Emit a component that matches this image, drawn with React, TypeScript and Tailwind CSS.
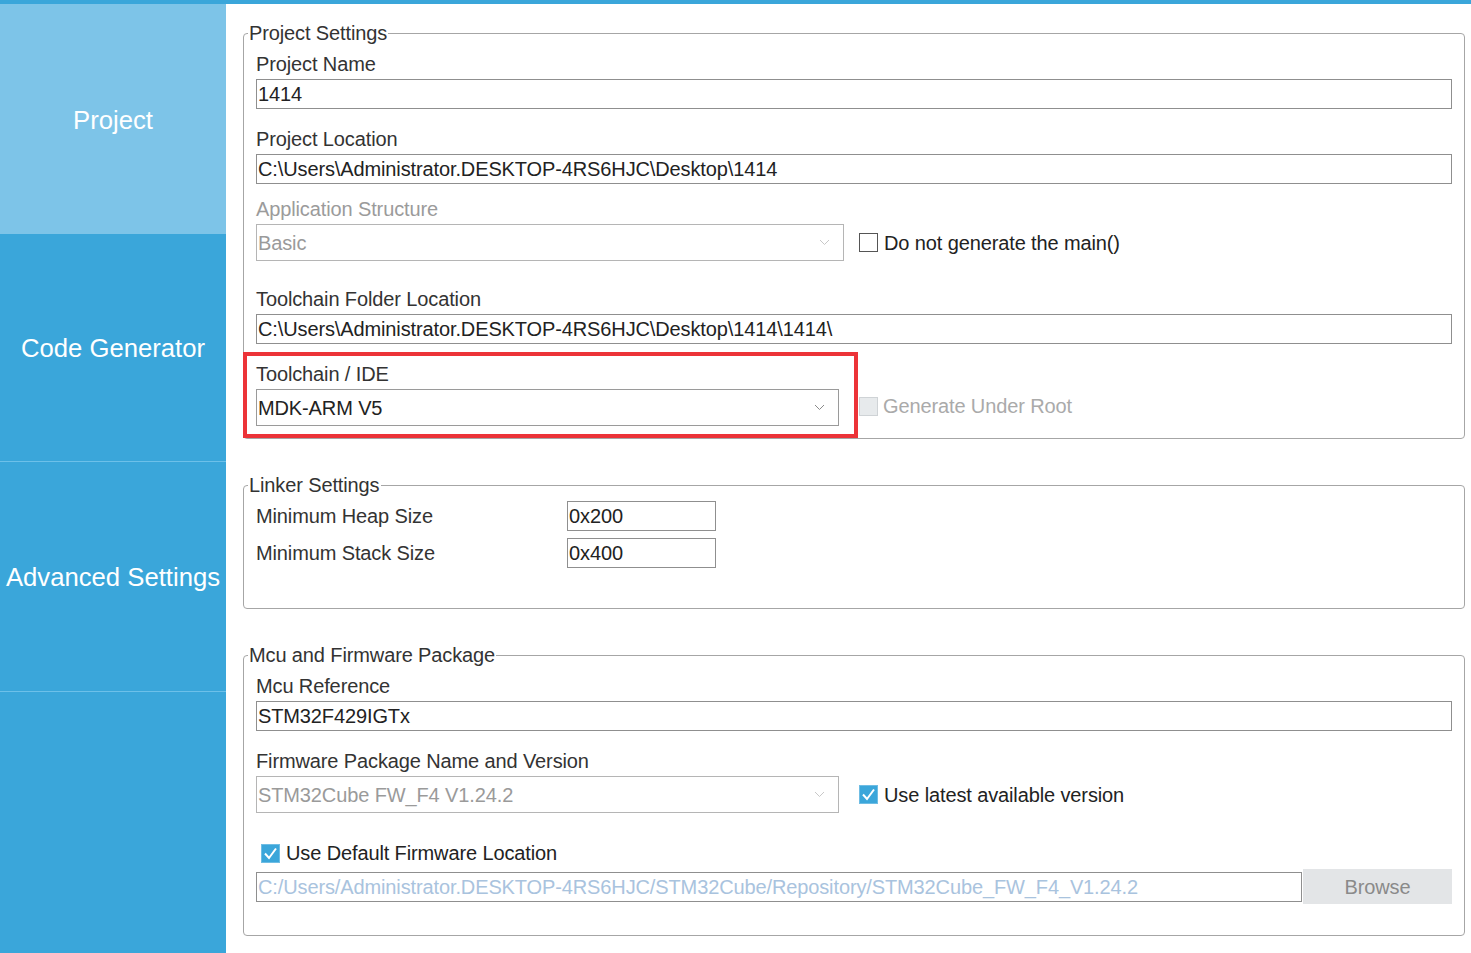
import React from 'react';

const FONT = "font-['Liberation_Sans',Arial,sans-serif]";

const Chevron = ({ light }: { light?: boolean }) => (
  <svg width="11" height="7" viewBox="0 0 11 7" className="shrink-0">
    <path d="M1 1 L5.5 5.5 L10 1" fill="none" stroke={light ? '#c8c8c8' : '#8a8a8a'} strokeWidth="1" />
  </svg>
);

const Checkbox = ({ state }: { state: 'off' | 'on' | 'disabled' }) => {
  if (state === 'on') {
    return (
      <span className="w-[19px] h-[19px] shrink-0 bg-[#3ba6da] border border-[#6fbde4] flex items-center justify-center">
        <svg width="15" height="13" viewBox="0 0 15 13">
          <path d="M2 6.5 L6 11 L13 1.5" fill="none" stroke="#ffffff" strokeWidth="2" />
        </svg>
      </span>
    );
  }
  if (state === 'disabled') {
    return <span className="w-[19px] h-[19px] shrink-0 bg-[#e7eaec] border border-[#cfd3d6]" />;
  }
  return <span className="w-[19px] h-[19px] shrink-0 bg-white border border-[#555]" />;
};

const TextInput = ({ value, className = '' }: { value: string; className?: string }) => (
  <div className={`h-[30px] border border-[#8f8f8f] bg-white flex items-center pl-[1px] text-[20px] text-[#222] whitespace-nowrap overflow-hidden ${className}`}>
    {value}
  </div>
);

const Select = ({ value, disabled, width }: { value: string; disabled?: boolean; width: string }) => (
  <div className={`${width} h-[37px] border ${disabled ? 'border-[#b5b5b5]' : 'border-[#9a9a9a]'} bg-white flex items-center justify-between pl-[1px] pr-[13px] text-[20px] ${disabled ? 'text-[#9a9a9a]' : 'text-[#222]'}`}>
    <span>{value}</span>
    <Chevron light={disabled} />
  </div>
);

const Label = ({ children, className = '', muted }: { children: React.ReactNode; className?: string; muted?: boolean }) => (
  <div className={`h-[22px] leading-[22px] text-[20px] ${muted ? 'text-[#9b9b9b]' : 'text-[#333]'} ${className}`}>{children}</div>
);

const Group = ({ title, children, className = '' }: { title: string; children: React.ReactNode; className?: string }) => (
  <fieldset className={`border border-[#a6a6a6] rounded-[4px] ${className}`}>
    <legend className="ml-[4px] px-[1px] text-[20px] leading-[22px] text-[#333]">{title}</legend>
    {children}
  </fieldset>
);

const tabs = [
  { name: 'Project', active: true },
  { name: 'Code Generator' },
  { name: 'Advanced Settings' },
];

export default function App() {
  return (
    <div className={`w-[1471px] h-[953px] overflow-hidden bg-white flex flex-col ${FONT}`}>
      <div className="h-[4px] bg-[#3aa6da] shrink-0" />
      <div className="flex flex-1 min-h-0">
        {/* Sidebar */}
        <div className="w-[226px] bg-[#3aa6da] flex flex-col">
          {tabs.map((t, i) => (
            <div
              key={t.name}
              className={`flex items-center justify-center pt-[2px] text-[25.7px] text-white whitespace-nowrap ${
                t.active ? 'h-[230px] bg-[#7dc4e8]' : 'h-[228px] bg-[#3aa6da]'
              } ${i === 1 ? 'border-b border-[#6cc0e9] h-[228px]' : ''} ${i === 2 ? 'border-b border-[#6cc0e9] h-[230px]' : ''}`}
            >
              {t.name}
            </div>
          ))}
        </div>

        {/* Main */}
        <div className="flex-1 pl-[17px] pr-[6px] pt-[18px] tracking-[-0.12px]">
          <Group title="Project Settings">
            <div className="px-3">
              <Label className="mt-[9px]">Project Name</Label>
              <TextInput className="mt-[4px]" value="1414" />
              <Label className="mt-[19px]">Project Location</Label>
              <TextInput className="mt-[4px]" value="C:\Users\Administrator.DESKTOP-4RS6HJC\Desktop\1414" />
              <Label className="mt-[14px]" muted>Application Structure</Label>
              <div className="mt-[4px] flex items-center">
                <Select width="w-[588px]" value="Basic" disabled />
                <div className="ml-[15px] flex items-center gap-[6px]">
                  <Checkbox state="off" />
                  <span className="text-[20px] text-[#222]">Do not generate the main()</span>
                </div>
              </div>
              <Label className="mt-[27px]">Toolchain Folder Location</Label>
              <TextInput className="mt-[4px]" value="C:\Users\Administrator.DESKTOP-4RS6HJC\Desktop\1414\1414\" />
              <div className="mt-[8px] flex items-end">
                <div className="relative -ml-[13px] w-[615px] border-4 border-[#ec3338] pl-[9px] pt-[7px] pb-[8px]">
                  <Label>Toolchain / IDE</Label>
                  <div className="mt-[4px]">
                    <Select width="w-[583px]" value="MDK-ARM V5" />
                  </div>
                </div>
                <div className="ml-[1px] mb-[17px] flex items-center gap-[5px]">
                  <Checkbox state="disabled" />
                  <span className="text-[20px] text-[#aaaaaa]">Generate Under Root</span>
                </div>
              </div>
            </div>
          </Group>

          <Group title="Linker Settings" className="mt-[35px]">
            <div className="px-3 pb-[40px]">
              <div className="mt-[5px] flex items-center">
                <Label className="w-[311px]">Minimum Heap Size</Label>
                <TextInput className="w-[149px]" value="0x200" />
              </div>
              <div className="mt-[7px] flex items-center">
                <Label className="w-[311px]">Minimum Stack Size</Label>
                <TextInput className="w-[149px]" value="0x400" />
              </div>
            </div>
          </Group>

          <Group title="Mcu and Firmware Package" className="mt-[35px]">
            <div className="px-3 pb-[31px]">
              <Label className="mt-[9px]">Mcu Reference</Label>
              <TextInput className="mt-[4px]" value="STM32F429IGTx" />
              <Label className="mt-[19px]">Firmware Package Name and Version</Label>
              <div className="mt-[4px] flex items-center">
                <Select width="w-[583px]" value="STM32Cube FW_F4 V1.24.2" disabled />
                <div className="ml-[20px] flex items-center gap-[6px]">
                  <Checkbox state="on" />
                  <span className="text-[20px] text-[#222]">Use latest available version</span>
                </div>
              </div>
              <div className="mt-[29px] h-[22px] flex items-center gap-[6px] pl-[5px]">
                <Checkbox state="on" />
                <span className="text-[20px] text-[#222]">Use Default Firmware Location</span>
              </div>
              <div className="mt-[5px] flex items-center">
                <div className="flex-1 h-[30px] border border-[#8f8f8f] bg-white flex items-center pl-[1px] text-[20px] text-[#a9c3de] whitespace-nowrap overflow-hidden">
                  C:/Users/Administrator.DESKTOP-4RS6HJC/STM32Cube/Repository/STM32Cube_FW_F4_V1.24.2
                </div>
                <div className="ml-[1px] w-[149px] h-[35px] bg-[#e3e5e7] flex items-center justify-center text-[20px] text-[#8a8a8a]">
                  Browse
                </div>
              </div>
            </div>
          </Group>
        </div>
      </div>
    </div>
  );
}
